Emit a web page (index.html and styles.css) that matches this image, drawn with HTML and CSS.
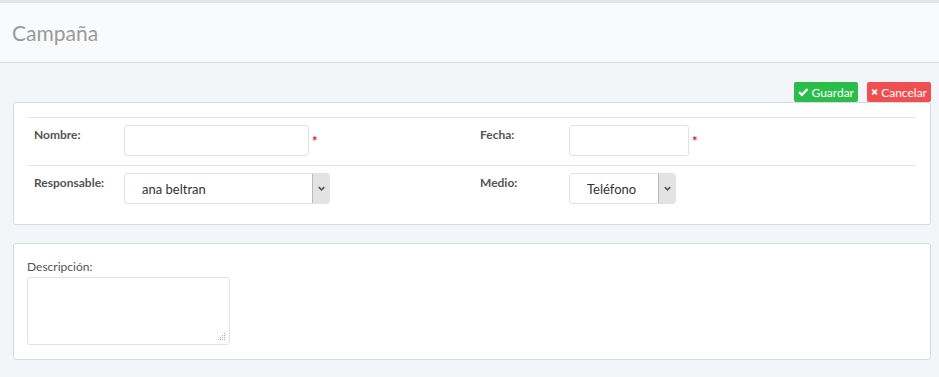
FILE: index.html
```html
<!DOCTYPE html>
<html lang="es">
<head>
<meta charset="utf-8">
<title>Campaña</title>
<link rel="stylesheet" href="styles.css">
</head>
<body>
<header class="page-header">
  <h1 class="page-title">Campaña</h1>
</header>
<main class="content">
  <div class="actions">
    <button class="btn btn-save" type="button">
      <svg class="ico" viewBox="0 0 12 12" width="12" height="12"><path d="M1.2 6.2 L4.5 9.3 L10.9 2.7" fill="none" stroke="#fff" stroke-width="2.6"/></svg>Guardar
    </button>
    <button class="btn btn-cancel" type="button">
      <svg class="ico" viewBox="0 0 12 12" width="10" height="10"><path d="M2 2 L10 10 M10 2 L2 10" fill="none" stroke="#fff" stroke-width="3.2"/></svg>Cancelar
    </button>
  </div>
  <section class="card card-main">
    <div class="grid">
      <div class="row">
        <div class="cell label">Nombre:</div>
        <div class="cell field"><span class="input w-nombre"></span><span class="req">*</span></div>
        <div class="cell label">Fecha:</div>
        <div class="cell field"><span class="input w-fecha"></span><span class="req">*</span></div>
      </div>
      <div class="row">
        <div class="cell label">Responsable:</div>
        <div class="cell field">
          <span class="select w-resp"><span class="select-text">ana beltran</span><span class="select-arrow"><svg viewBox="0 0 10 10" width="9" height="9"><path d="M2 3.5 L5 6.5 L8 3.5" fill="none" stroke="#555" stroke-width="1.8"/></svg></span></span>
        </div>
        <div class="cell label">Medio:</div>
        <div class="cell field">
          <span class="select w-medio"><span class="select-text">Teléfono</span><span class="select-arrow"><svg viewBox="0 0 10 10" width="9" height="9"><path d="M2 3.5 L5 6.5 L8 3.5" fill="none" stroke="#555" stroke-width="1.8"/></svg></span></span>
        </div>
      </div>
    </div>
  </section>
  <section class="card card-desc">
    <div class="desc-label">Descripción:</div>
    <div class="textarea"><svg class="grip" viewBox="0 0 8 8" width="8" height="8"><g fill="#aaa"><rect x="6" y="0" width="1" height="1"/><rect x="4" y="2" width="1" height="1"/><rect x="6" y="2" width="1" height="1"/><rect x="2" y="4" width="1" height="1"/><rect x="4" y="4" width="1" height="1"/><rect x="6" y="4" width="1" height="1"/><rect x="0" y="6" width="1" height="1"/><rect x="2" y="6" width="1" height="1"/><rect x="4" y="6" width="1" height="1"/><rect x="6" y="6" width="1" height="1"/></g></svg></div>
  </section>
</main>
</body>
</html>
```

FILE: styles.css
```css
* { box-sizing: border-box; }
html, body { margin: 0; padding: 0; }
body {
  background: #f3f5f9;
  font-family: Lato, "Open Sans", sans-serif;
  color: #555;
  width: 939px;
  height: 377px;
  overflow: hidden;
}
.page-header {
  height: 63px;
  background: #f9fafc;
  border-top: 3px solid #e2e4e7;
  border-bottom: 1px solid #cfdae5;
  padding: 0 12px;
  display: flex;
  align-items: center;
}
.page-title {
  margin: 0;
  font-size: 21px;
  font-weight: 400;
  color: #9a9a9a;
  padding-bottom: 1px;
}
.content {
  padding: 19px 8px 0 13px;
}
.actions {
  display: flex;
  justify-content: flex-end;
  gap: 9px;
  height: 20px;
}
.btn {
  border: none;
  border-radius: 2px;
  color: #fff;
  font-family: inherit;
  font-size: 12px;
  height: 20px;
  padding: 0 4px;
  display: flex;
  align-items: center;
  gap: 3px;
  cursor: pointer;
}
.btn-save { background: #2bbd4a; width: 64px; }
.btn-cancel { background: #f04f51; width: 64px; }
.ico { display: block; }
.card {
  background: #fff;
  border: 1px solid #d3dbe4;
  border-radius: 3px;
}
.card-main {
  height: 123px;
  padding: 14px 14px 0 13px;
}
.grid {
  border-top: 1px solid #e4e8ec;
}
.row {
  display: grid;
  grid-template-columns: 90px 356px 89px 1fr;
  height: 47px;
}
.row + .row { border-top: 1px solid #e4e8ec; }
.cell { padding: 7px 7px 0 7px; }
.label {
  font-weight: 700;
  font-size: 12px;
  color: #555;
  padding-top: 9px;
}
.field { display: flex; align-items: flex-start; }
.input {
  display: block;
  height: 31px;
  border: 1px solid #dfe3e6;
  border-radius: 3px;
  background: #fff;
}
.w-nombre { width: 185px; }
.w-fecha { width: 120px; }
.req {
  color: #e02020;
  font-size: 13px;
  line-height: 13px;
  margin-left: 3px;
  margin-top: 10px;
  font-weight: 700;
}
.select {
  display: flex;
  align-items: stretch;
  height: 31px;
  border: 1px solid #dfe3e6;
  border-radius: 3px;
  background: #fff;
}
.w-resp { width: 206px; }
.w-medio { width: 107px; }
.select-text {
  flex: 1;
  padding-left: 17px;
  font-size: 13px;
  color: #333;
  display: flex;
  align-items: center;
  padding-top: 1px;
}
.select-arrow {
  width: 17px;
  background: #e3e3e3;
  border-left: 1px solid #b9b9b9;
  border-radius: 0 2px 2px 0;
  display: flex;
  align-items: center;
  justify-content: center;
}
.card-desc {
  margin-top: 18px;
  height: 117px;
  padding: 15px 14px 0 13px;
}
.desc-label {
  font-size: 12px;
  color: #555;
  height: 18px;
}
.textarea {
  width: 203px;
  height: 68px;
  border: 1px solid #dfe3e6;
  border-radius: 3px;
  display: flex;
  justify-content: flex-end;
  align-items: flex-end;
  padding: 0 3px 3px 0;
}
.grip { display: block; }
```
